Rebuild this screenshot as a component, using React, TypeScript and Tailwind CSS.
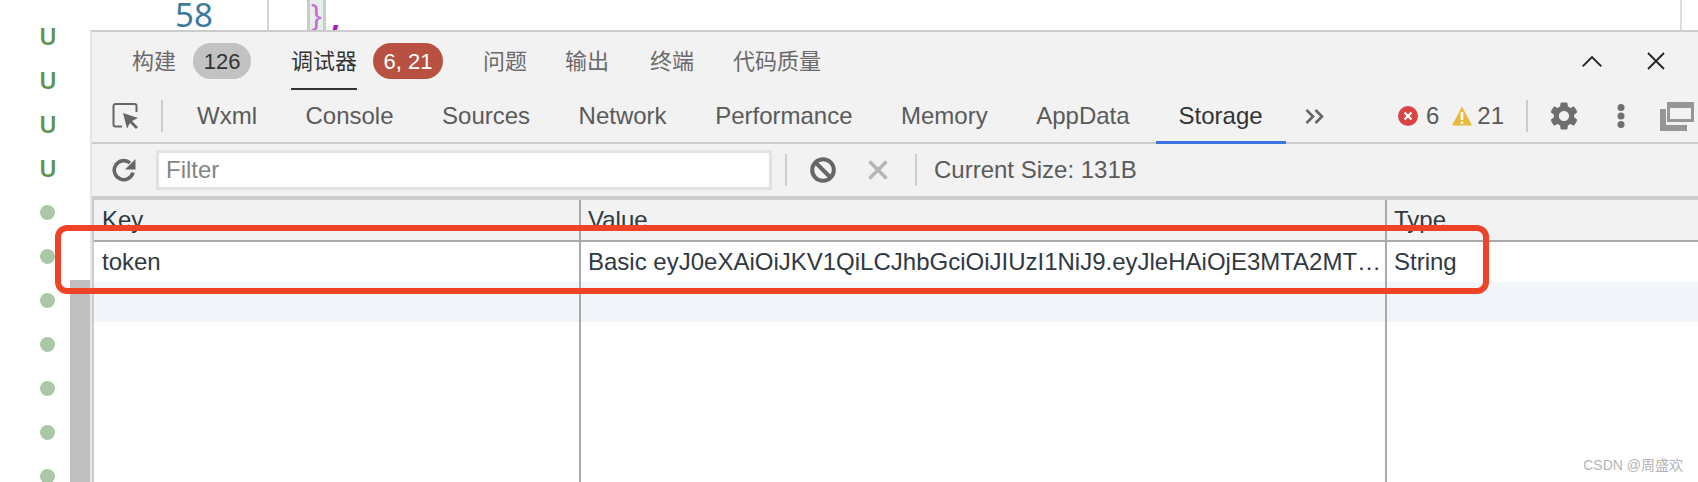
import { MdSettings } from "react-icons/md";

const devTabs = ["Wxml", "Console", "Sources", "Network", "Performance", "Memory", "AppData"];

function InspectIcon() {
  return (
    <svg width="27" height="26" viewBox="0 0 27 26" fill="none" className="ml-[20px] shrink-0">
      <path d="M10 23.5H3.5a2 2 0 0 1-2-2V3a2 2 0 0 1 2-2h19a2 2 0 0 1 2 2v6" stroke="#666" strokeWidth="2" />
      <path d="M11 10l15 5-6 3 6 6-2 2-6-6-3 5.500z" fill="#666" />
    </svg>
  );
}

function ReloadIcon() {
  return (
    <svg width="24" height="24" viewBox="0 0 24 24" fill="none" className="ml-[20px] shrink-0">
      <path d="M21 14.500A9.500 9.500 0 1 1 18 5" stroke="#666" strokeWidth="3.600" />
      <path d="M23.500 1v10.500H13z" fill="#666" />
    </svg>
  );
}

function ErrorIcon() {
  return (
    <svg width="20" height="20" viewBox="0 0 20 20" className="shrink-0">
      <circle cx="10" cy="10" r="10" fill="#d94545" />
      <path d="M6.500 6.500l7 7M13.500 6.500l-7 7" stroke="#fff" strokeWidth="2.200" />
    </svg>
  );
}

function WarnIcon() {
  return (
    <svg width="20" height="20" viewBox="0 0 20 20" className="shrink-0">
      <path d="M10 0.500L20 19.500H0z" fill="#eab83c" />
      <path d="M10 6v8" stroke="#fff" strokeWidth="2.600" />
      <rect x="8.700" y="15.500" width="2.600" height="2.400" fill="#fff" />
    </svg>
  );
}

function DockIcon() {
  return (
    <svg width="34" height="30" viewBox="0 0 34 30" fill="none" className="shrink-0">
      <path d="M0 8h6v16h21v6H0z" fill="#969696" />
      <path d="M7 1h27v20H7z" fill="#969696" />
      <path d="M10 7h21v11H10z" fill="#f2f2f2" />
    </svg>
  );
}

export default function App() {
  return (
    <div className="relative w-[1698px] h-[482px] flex overflow-hidden bg-white font-['Liberation_Sans','Noto_Sans_CJK_SC',sans-serif]">
      {/* gutter */}
      <div className="w-[90px] h-full flex shrink-0">
        <div className="w-[70px] pt-[14px] flex flex-col">
          {[0, 1, 2, 3].map((i) => (
            <div key={i} className="h-[44px] w-[16px] ml-[40px] shrink-0 flex items-center justify-center text-[24px] font-semibold font-['Noto_Sans',sans-serif] text-[#5c9452]">
              U
            </div>
          ))}
          {[0, 1, 2, 3, 4, 5, 6].map((i) => (
            <div key={i} className="h-[44px] w-[16px] ml-[39px] shrink-0 flex items-center justify-center">
              <div className="w-[15px] h-[15px] rounded-full bg-[#abc8a6]" />
            </div>
          ))}
        </div>
        <div className="w-[20px] pt-[280px]">
          <div className="h-full bg-[#c0c0c0]" />
        </div>
      </div>

      <div className="flex-1 flex flex-col min-w-0">
        {/* editor strip */}
        <div className="h-[30px] flex overflow-hidden pl-[85px] shrink-0">
          <div className="w-[92px] text-[33px] leading-[30px] font-['Noto_Sans',sans-serif] text-[#3c7a9c]">58</div>
          <div className="w-[2px] bg-[#d4d4d4]" />
          <div className="ml-[38px] w-[19px] h-full bg-[#e8efe8] border-x-[3px] border-[#c8cdc8] flex justify-center text-[30px] leading-[30px] font-['Noto_Sans',sans-serif] text-[#c86bd8]">
            {"}"}
          </div>
          <div className="ml-[5px] text-[32px] leading-[34px] font-bold font-['Noto_Sans',sans-serif] text-[#a31fc4]">,</div>
          <div className="ml-auto mr-[16px] w-[2px] bg-[#dddddd]" />
        </div>

        {/* panel */}
        <div className="flex-1 flex flex-col border-t-2 border-[#cccccc] border-l-2 border-l-[#e6e6e6] bg-[#f2f2f2] min-h-0">
          {/* top tabs */}
          <div className="h-[58px] flex items-center shrink-0 text-[22px] text-[#6a6a6a]">
            <span className="ml-[40px]">构建</span>
            <span className="ml-[17px] w-[58px] h-[36px] rounded-full bg-[#c2c2c2] text-[#333] flex items-center justify-center">126</span>
            <span className="ml-[40px] h-full flex items-center border-b-2 border-[#333] text-[#333] pt-[2px]">调试器</span>
            <span className="ml-[16px] w-[70px] h-[36px] rounded-full bg-[#b95143] text-white flex items-center justify-center">6, 21</span>
            <span className="ml-[40px]">问题</span>
            <span className="ml-[38px]">输出</span>
            <span className="ml-[41px]">终端</span>
            <span className="ml-[39px]">代码质量</span>
            <svg width="20" height="11" viewBox="0 0 20 11" fill="none" className="ml-auto shrink-0">
              <path d="M0.700 10.300L10 1l9.300 9.300" stroke="#222" strokeWidth="1.800" />
            </svg>
            <svg width="18" height="18" viewBox="0 0 18 18" fill="none" className="ml-[45px] mr-[33px] shrink-0">
              <path d="M1 1l16 16M17 1L1 17" stroke="#222" strokeWidth="1.800" />
            </svg>
          </div>

          {/* devtools tabs */}
          <div className="h-[54px] flex items-center shrink-0 border-b-2 border-[#cccccc] text-[24px] text-[#5a5a5a]">
            <InspectIcon />
            <div className="ml-[22px] w-[2px] h-[32px] bg-[#cccccc]" />
            <div className="ml-[34px] flex gap-[48.5px]">
              {devTabs.map((t) => (
                <span key={t}>{t}</span>
              ))}
            </div>
            <div className="ml-[26px] px-[23px] h-[54px] flex items-center border-b-[3px] border-[#3b74e0] text-[#333] -mb-[2px]">Storage</div>
            <svg width="20" height="15" viewBox="0 0 20 15" fill="none" className="ml-[19px] shrink-0">
              <path d="M1.500 1l6.500 6.500-6.500 6.500M10.500 1l6.500 6.500-6.500 6.500" stroke="#666" strokeWidth="2.600" />
            </svg>
            <div className="ml-auto flex items-center h-full">
              <ErrorIcon />
              <span className="ml-[8px]">6</span>
              <span className="ml-[13px]"><WarnIcon /></span>
              <span className="ml-[5px]">21</span>
              <div className="ml-[22px] w-[2px] h-[32px] bg-[#cccccc]" />
              <MdSettings className="ml-[19px] text-[#6e6e6e] shrink-0" size={34} />
              <svg width="8" height="24" viewBox="0 0 8 24" className="ml-[36px] shrink-0">
                <circle cx="4" cy="3.500" r="3.500" fill="#6e6e6e" />
                <circle cx="4" cy="12" r="3.500" fill="#6e6e6e" />
                <circle cx="4" cy="20.500" r="3.500" fill="#6e6e6e" />
              </svg>
              <span className="ml-[35px] mr-[4px]"><DockIcon /></span>
            </div>
          </div>

          {/* toolbar */}
          <div className="h-[56px] flex items-center shrink-0 border-b-4 border-[#cccccc] text-[#5a5a5a]">
            <ReloadIcon />
            <div className="ml-[20px] w-[616px] h-[40px] bg-white border-[3px] border-[#e2e2e2] flex items-center pl-[7px] text-[24px] text-[#858585]">Filter</div>
            <div className="ml-[13px] w-[2px] h-[32px] bg-[#cccccc]" />
            <svg width="26" height="26" viewBox="0 0 26 26" fill="none" className="ml-[23px] shrink-0">
              <circle cx="13" cy="13" r="10.800" stroke="#666" strokeWidth="4" />
              <path d="M5.500 5.500l15 15" stroke="#666" strokeWidth="4" />
            </svg>
            <svg width="20" height="20" viewBox="0 0 20 20" fill="none" className="ml-[32px] shrink-0">
              <path d="M1.500 1.500l17 17M18.500 1.500l-17 17" stroke="#b5b5b5" strokeWidth="3.400" />
            </svg>
            <div className="ml-[27px] w-[2px] h-[32px] bg-[#cccccc]" />
            <span className="ml-[17px] text-[24px]">Current Size: 131B</span>
          </div>

          {/* table */}
          <div className="flex-1 flex flex-col border-l-2 border-[#cccccc] bg-white text-[24px] text-[#303942] min-h-0">
            <div className="h-[42px] shrink-0 grid grid-cols-[485px_806px_1fr] bg-[#f2f2f2] border-b-2 border-[#aaaaaa]">
              <div className="pl-[8px] flex items-center">Key</div>
              <div className="pl-[7px] flex items-center border-l-2 border-[#aaaaaa]">Value</div>
              <div className="pl-[7px] flex items-center border-l-2 border-[#aaaaaa]">Type</div>
            </div>
            <div className="h-[40px] shrink-0 grid grid-cols-[485px_806px_1fr]">
              <div className="pl-[8px] flex items-center">token</div>
              <div className="pl-[7px] flex items-center border-l-2 border-[#aaaaaa] whitespace-nowrap overflow-hidden">Basic eyJ0eXAiOiJKV1QiLCJhbGciOiJIUzI1NiJ9.eyJleHAiOjE3MTA2MT…</div>
              <div className="pl-[7px] flex items-center border-l-2 border-[#aaaaaa]">String</div>
            </div>
            <div className="h-[40px] shrink-0 grid grid-cols-[485px_806px_1fr] bg-[#f2f5fa]">
              <div />
              <div className="border-l-2 border-[#aaaaaa]" />
              <div className="border-l-2 border-[#aaaaaa]" />
            </div>
            <div className="flex-1 grid grid-cols-[485px_806px_1fr]">
              <div />
              <div className="border-l-2 border-[#aaaaaa]" />
              <div className="border-l-2 border-[#aaaaaa]" />
            </div>
          </div>
        </div>
      </div>

      {/* red annotation + watermark lie over the page */}
      <div className="absolute left-[55px] top-[225px] w-[1434px] h-[69px] border-[6px] border-[#ee4327] rounded-[12px]" />
      <div className="absolute right-[15px] top-[456px] text-[14px] leading-[18px] text-[#b4b4b4]">CSDN @周盛欢</div>
    </div>
  );
}
